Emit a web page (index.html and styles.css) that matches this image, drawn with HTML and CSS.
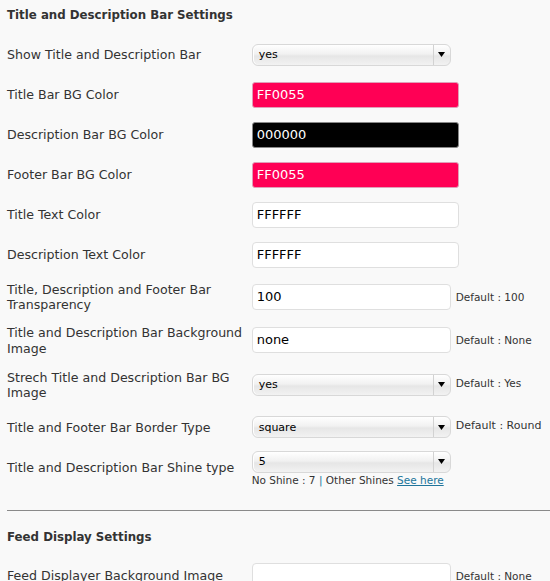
FILE: index.html
```html
<!DOCTYPE html>
<html>
<head>
<meta charset="utf-8">
<link rel="stylesheet" href="styles.css">
</head>
<body>
<div class="page">
  <h3 class="section-title">Title and Description Bar Settings</h3>
  <div class="rows">
    <div class="row r40">
      <div class="label">Show Title and Description Bar</div>
      <div class="field">
        <div class="select"><span class="sel-text">yes</span><span class="sel-arrow"><svg width="7" height="5" viewBox="0 0 7 5"><path d="M0 0H7L3.5 5Z" fill="#000"/></svg></span></div>
      </div>
    </div>
    <div class="row r40">
      <div class="label">Title Bar BG Color</div>
      <div class="field"><div class="input color pink">FF0055</div></div>
    </div>
    <div class="row r40">
      <div class="label">Description Bar BG Color</div>
      <div class="field"><div class="input color black">000000</div></div>
    </div>
    <div class="row r40">
      <div class="label">Footer Bar BG Color</div>
      <div class="field"><div class="input color pink">FF0055</div></div>
    </div>
    <div class="row r40">
      <div class="label">Title Text Color</div>
      <div class="field"><div class="input color">FFFFFF</div></div>
    </div>
    <div class="row r40">
      <div class="label">Description Text Color</div>
      <div class="field"><div class="input color">FFFFFF</div></div>
    </div>
    <div class="row r44">
      <div class="label">Title, Description and Footer Bar Transparency</div>
      <div class="field"><div class="input text">100</div><span class="default">Default : 100</span></div>
    </div>
    <div class="row r43">
      <div class="label">Title and Description Bar Background Image</div>
      <div class="field"><div class="input text">none</div><span class="default">Default : None</span></div>
    </div>
    <div class="row r46">
      <div class="label">Strech Title and Description Bar BG Image</div>
      <div class="field">
        <div class="select"><span class="sel-text">yes</span><span class="sel-arrow"><svg width="7" height="5" viewBox="0 0 7 5"><path d="M0 0H7L3.5 5Z" fill="#000"/></svg></span></div>
        <span class="default up">Default : Yes</span>
      </div>
    </div>
    <div class="row r39">
      <div class="label">Title and Footer Bar Border Type</div>
      <div class="field">
        <div class="select"><span class="sel-text">square</span><span class="sel-arrow"><svg width="7" height="5" viewBox="0 0 7 5"><path d="M0 0H7L3.5 5Z" fill="#000"/></svg></span></div>
        <span class="default up big">Default : Round</span>
      </div>
    </div>
    <div class="row r41">
      <div class="label">Title and Description Bar Shine type</div>
      <div class="field stack">
        <div class="select"><span class="sel-text">5</span><span class="sel-arrow"><svg width="7" height="5" viewBox="0 0 7 5"><path d="M0 0H7L3.5 5Z" fill="#000"/></svg></span></div>
        <div class="hint">No Shine : 7 <span class="sep">|</span> Other Shines <a href="#">See here</a></div>
      </div>
    </div>
  </div>
  <hr class="divider">
  <h3 class="section-title second">Feed Display Settings</h3>
  <div class="rows">
    <div class="row r40 last">
      <div class="label">Feed Displayer Background Image</div>
      <div class="field"><div class="input text"></div><span class="default">Default : None</span></div>
    </div>
  </div>
</div>
</body>
</html>
```

FILE: styles.css
```css
html, body {
  margin: 0;
  padding: 0;
  background: #f9f9f9;
  overflow: hidden;
}
body {
  font-family: "DejaVu Sans", "Liberation Sans", sans-serif;
  color: #333;
}
.page {
  padding-left: 7px;
}
.section-title {
  margin: 0;
  font-size: 11.8px;
  font-weight: bold;
  line-height: 30px;
  height: 34.5px;
  color: #333;
}
.section-title.second {
  height: auto;
  line-height: 26px;
  margin-top: 13px;
  margin-bottom: 6px;
}
.row {
  display: flex;
  align-items: center;
}
.r40 { height: 40px; }
.r44 { height: 44px; }
.r43 { height: 43px; }
.r46 { height: 46px; }
.r39 { height: 39px; }
.r41 { height: 41px; }
.label {
  width: 244.7px;
  flex: none;
  font-size: 12.6px;
  line-height: 15.7px;
  padding-right: 8px;
  padding-top: 1.5px;
  box-sizing: border-box;
}
.field {
  display: flex;
  align-items: center;
  gap: 5px;
}
.field.stack {
  flex-direction: column;
  align-items: flex-start;
  gap: 1px;
  padding-top: 2px;
}
.input {
  box-sizing: border-box;
  height: 26px;
  border: 1px solid #dfdfdf;
  border-radius: 4px;
  background: #fff;
  font-size: 13px;
  line-height: 24px;
  padding-left: 4px;
  color: #000;
}
.input.color {
  width: 207px;
}
.input.text {
  width: 199px;
}
.input.pink {
  background: #ff0055;
  border-color: #e0a0b8;
  color: #fff;
  border-radius: 3px;
}
.input.black {
  background: #000;
  border-color: #888;
  color: #fff;
  border-radius: 3px;
}
.select {
  box-sizing: border-box;
  width: 199px;
  height: 22px;
  border: 1px solid #d8d8d8;
  border-radius: 6px;
  background: linear-gradient(#ffffff, #f1f1f1 45%, #e6e6e6 55%, #f2f2f2);
  display: flex;
  align-items: center;
  box-shadow: inset 1px 0 0 #fff;
}
.sel-text {
  flex: 1;
  font-size: 11px;
  color: #000;
  padding-left: 6px;
}
.sel-arrow {
  width: 16px;
  height: 100%;
  border-left: 1px solid #d2d2d2;
  display: flex;
  align-items: center;
  justify-content: center;
}
.default {
  font-size: 10.5px;
  color: #333;
}
.default.up {
  position: relative;
  top: -2px;
}
.default.big {
  font-size: 11px;
}
.hint {
  font-size: 10.5px;
  color: #333;
}
.hint .sep {
  color: #21759b;
}
.hint a {
  color: #21759b;
  text-decoration: underline;
}
.divider {
  margin: 22px 0 0 0;
  border: 0;
  border-top: 1px solid #8a8a8a;
  height: 0;
}
```
